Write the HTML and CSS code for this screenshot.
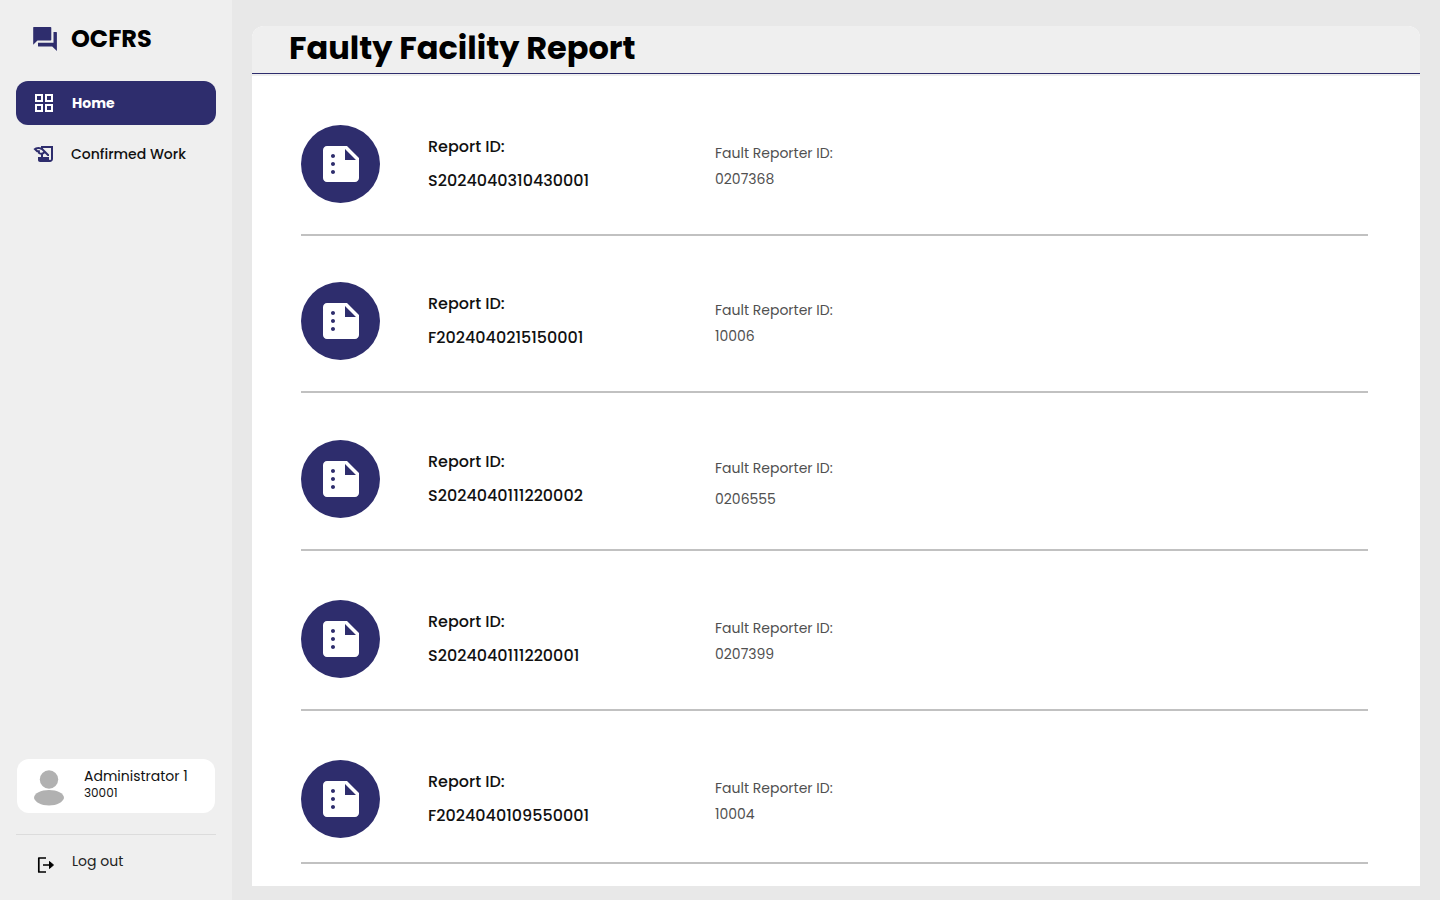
FILE: index.html
```html
<!DOCTYPE html>
<html lang="en">
<head>
<meta charset="utf-8">
<meta name="viewport" content="width=device-width, initial-scale=1">
<title>OCFRS - Faulty Facility Report</title>
<link rel="stylesheet" href="styles.css">
</head>
<body>
<svg class="sprite" aria-hidden="true">
  <symbol id="report" viewBox="0 0 24 24">
    <path d="M15 3H5c-1.1 0-1.99.9-1.99 2L3 19c0 1.1.89 2 1.99 2H19c1.1 0 2-.9 2-2V9l-6-6zM8 17c-.55 0-1-.45-1-1s.45-1 1-1 1 .45 1 1-.45 1-1 1zm0-4c-.55 0-1-.45-1-1s.45-1 1-1 1 .45 1 1-.45 1-1 1zm0-4c-.55 0-1-.45-1-1s.45-1 1-1 1 .45 1 1-.45 1-1 1zm6 1V4.5l5.5 5.5H14z"/>
  </symbol>
</svg>
<div class="app">
  <aside class="sidebar">
    <div class="brand">
      <svg class="brand-icon" viewBox="0 0 24 24" aria-hidden="true"><path d="M.7 0H17.500a.8.8 0 0 1 .8.8v12a.8.8 0 0 1-.8.8H4.500L.2 17.800V.5A.5.5 0 0 1 .7 0zM20.500 5h2.800a.6.6 0 0 1 .6.6V24l-4.700-4.600H5.500a.5.500 0 0 1-.5-.5V15.700h15.500z"/></svg>
      <span class="brand-name">OCFRS</span>
    </div>
    <nav class="nav">
      <a class="nav-link active" href="#" aria-current="page">
        <svg class="icon" viewBox="0 0 24 24" aria-hidden="true"><path fill-rule="evenodd" d="M3 3h8v8H3zM5 5v4h4V5zM13 3h8v8h-8zM15 5v4h4V5zM3 13h8v8H3zM5 15v4h4v-4zM13 13h8v8h-8zM15 15v4h4v-4z"/></svg>
        <span>Home</span>
      </a>
      <a class="nav-link" href="#">
        <svg class="icon" viewBox="0 0 24 24" aria-hidden="true"><path d="M9 4v1.380c-.83-.33-1.720-.5-2.610-.5-1.790 0-3.580.68-4.950 2.050l3.330 3.330h1.110v1.110c.86.86 1.980 1.310 3.110 1.360V15H6v3c0 1.100.9 2 2 2h10c1.660 0 3-1.340 3-3V4H9zm-1.110 6.410V8.260H5.610L4.570 7.220a5.070 5.070 0 0 1 1.820-.34c1.340 0 2.590.52 3.540 1.460l1.410 1.410-.2.2a2.700 2.700 0 0 1-1.920.8c-.47 0-.93-.12-1.330-.34zM19 17c0 .55-.45 1-1 1s-1-.45-1-1v-2h-6v-2.590c.57-.23 1.100-.57 1.560-1.030l.2-.2L15.590 14H17v-1.410l-6-5.970V6h8v11z"/></svg>
        <span>Confirmed Work</span>
      </a>
    </nav>
    <div class="account">
      <div class="user">
        <svg class="avatar" viewBox="0 0 30 36" aria-hidden="true"><circle cx="15" cy="9.500" r="9.200"/><path d="M0 28c0-5 7-8 15-8s15 3 15 8c-1 4-7 7.500-15 7.500S1 32 0 28z"/></svg>
        <div>
          <p class="user-name">Administrator 1</p>
          <p class="user-id">30001</p>
        </div>
      </div>
      <button class="logout" type="button">
        <svg class="logout-icon" viewBox="0 0 18 18" aria-hidden="true"><path d="M9 2H1.800v14H9M6 9h9"/><path class="head" d="M12.500 5.500L16.500 9l-4 3.500z"/></svg>
        <span>Log out</span>
      </button>
    </div>
  </aside>
  <main class="main">
    <section class="panel">
      <header class="panel-head"><h1>Faulty Facility Report</h1></header>
      <ul class="reports">
        <li class="report roomy">
          <span class="badge"><svg class="badge-icon" aria-hidden="true"><use href="#report"/></svg></span>
          <div class="ident"><p>Report ID:</p><p>S2024040310430001</p></div>
          <div class="reporter"><p>Fault Reporter ID:</p><p>0207368</p></div>
        </li>
        <li class="report">
          <span class="badge"><svg class="badge-icon" aria-hidden="true"><use href="#report"/></svg></span>
          <div class="ident"><p>Report ID:</p><p>F2024040215150001</p></div>
          <div class="reporter"><p>Fault Reporter ID:</p><p>10006</p></div>
        </li>
        <li class="report medium">
          <span class="badge"><svg class="badge-icon" aria-hidden="true"><use href="#report"/></svg></span>
          <div class="ident"><p>Report ID:</p><p>S2024040111220002</p></div>
          <div class="reporter spread"><p>Fault Reporter ID:</p><p>0206555</p></div>
        </li>
        <li class="report roomy">
          <span class="badge"><svg class="badge-icon" aria-hidden="true"><use href="#report"/></svg></span>
          <div class="ident"><p>Report ID:</p><p>S2024040111220001</p></div>
          <div class="reporter"><p>Fault Reporter ID:</p><p>0207399</p></div>
        </li>
        <li class="report roomy">
          <span class="badge"><svg class="badge-icon" aria-hidden="true"><use href="#report"/></svg></span>
          <div class="ident"><p>Report ID:</p><p>F2024040109550001</p></div>
          <div class="reporter"><p>Fault Reporter ID:</p><p>10004</p></div>
        </li>
      </ul>
    </section>
  </main>
</div>
</body>
</html>
```
FILE: styles.css
```css
* { box-sizing: border-box; }
body {
  margin: 0;
  background: #e8e8e8;
  color: #111;
  font-family: Poppins, Inter, "Liberation Sans", sans-serif;
  font-size: 14px;
}
p, h1, ul { margin: 0; padding: 0; }
.sprite { display: none; }
.app { display: flex; min-height: 100vh; }

.sidebar {
  flex: 0 0 232px;
  display: flex;
  flex-direction: column;
  padding: 20px 16px 16px;
  background: #efefef;
}
.brand { display: flex; align-items: center; gap: 14px; height: 38px; padding-left: 17px; }
.brand-icon { width: 24px; height: 24px; fill: #2e2d6d; }
.brand-name { font-size: 24px; font-weight: 700; line-height: 36px; color: #000; }
.nav { display: flex; flex-direction: column; gap: 7px; margin-top: 23px; }
.nav-link {
  display: flex;
  align-items: center;
  gap: 15px;
  height: 44px;
  padding-left: 16px;
  border-radius: 12px;
  color: #111;
  font-weight: 500;
  text-decoration: none;
}
.icon { width: 24px; height: 24px; fill: #2e2d6d; }
.nav-link.active { gap: 16px; background: #2e2d6d; color: #fff; font-weight: 700; }
.active .icon { fill: #fff; }

.account { margin-top: auto; }
.user {
  display: flex;
  gap: 20px;
  height: 54px;
  margin: 0 1px 21px;
  padding: 7px 17px;
  border-radius: 12px;
  background: #fff;
}
.avatar { width: 30px; height: 36px; margin-top: 4px; fill: #b1b1b1; }
.user-name { line-height: 20px; }
.user-id { font-size: 12px; line-height: 14px; }
.logout {
  display: flex;
  align-items: center;
  gap: 17px;
  width: 100%;
  height: 50px;
  padding: 4px 0 0 21px;
  border: 0;
  border-top: 1px solid #dcdcdc;
  background: none;
  color: #222;
  font: inherit;
  text-align: left;
}
.logout-icon { width: 18px; height: 18px; margin-top: 7px; fill: none; stroke: #000; stroke-width: 1.7; stroke-linejoin: round; }
.logout-icon .head { fill: #000; stroke-width: 1; }

.main { flex: 1; padding: 26px 20px 14px; display: flex; }
.panel { flex: 1; border-radius: 12px 12px 0 0; background: #fff; overflow: hidden; }
.panel-head {
  padding: 0 37px 3px;
  border-bottom: 1px solid #2e2d6d;
  background: #efefef;
}
.panel-head h1 { font-size: 32px; font-weight: 700; line-height: 44px; color: #000; }
.reports { padding: 0 52px 0 49px; border-top: 2px solid #efefef; list-style: none; }
.report {
  display: grid;
  grid-template-columns: 79px 239px 1fr;
  column-gap: 48px;
  align-items: center;
  padding: 46px 0 31px;
  border-bottom: 2px solid #c1c1c1;
}
.report.medium { padding-top: 47px; }
.report.roomy { padding-top: 49px; }
.report:last-child { padding-bottom: 24px; }
.badge {
  display: flex;
  align-items: center;
  justify-content: center;
  height: 78px;
  border-radius: 50%;
  background: #2e2d6d;
}
.badge-icon { width: 48px; height: 48px; fill: #fff; }
.ident { font-size: 16px; font-weight: 500; line-height: 34px; }
.reporter { padding-top: 4px; color: #505050; line-height: 26px; }
.reporter.spread { padding-top: 9px; line-height: 31px; }
```
